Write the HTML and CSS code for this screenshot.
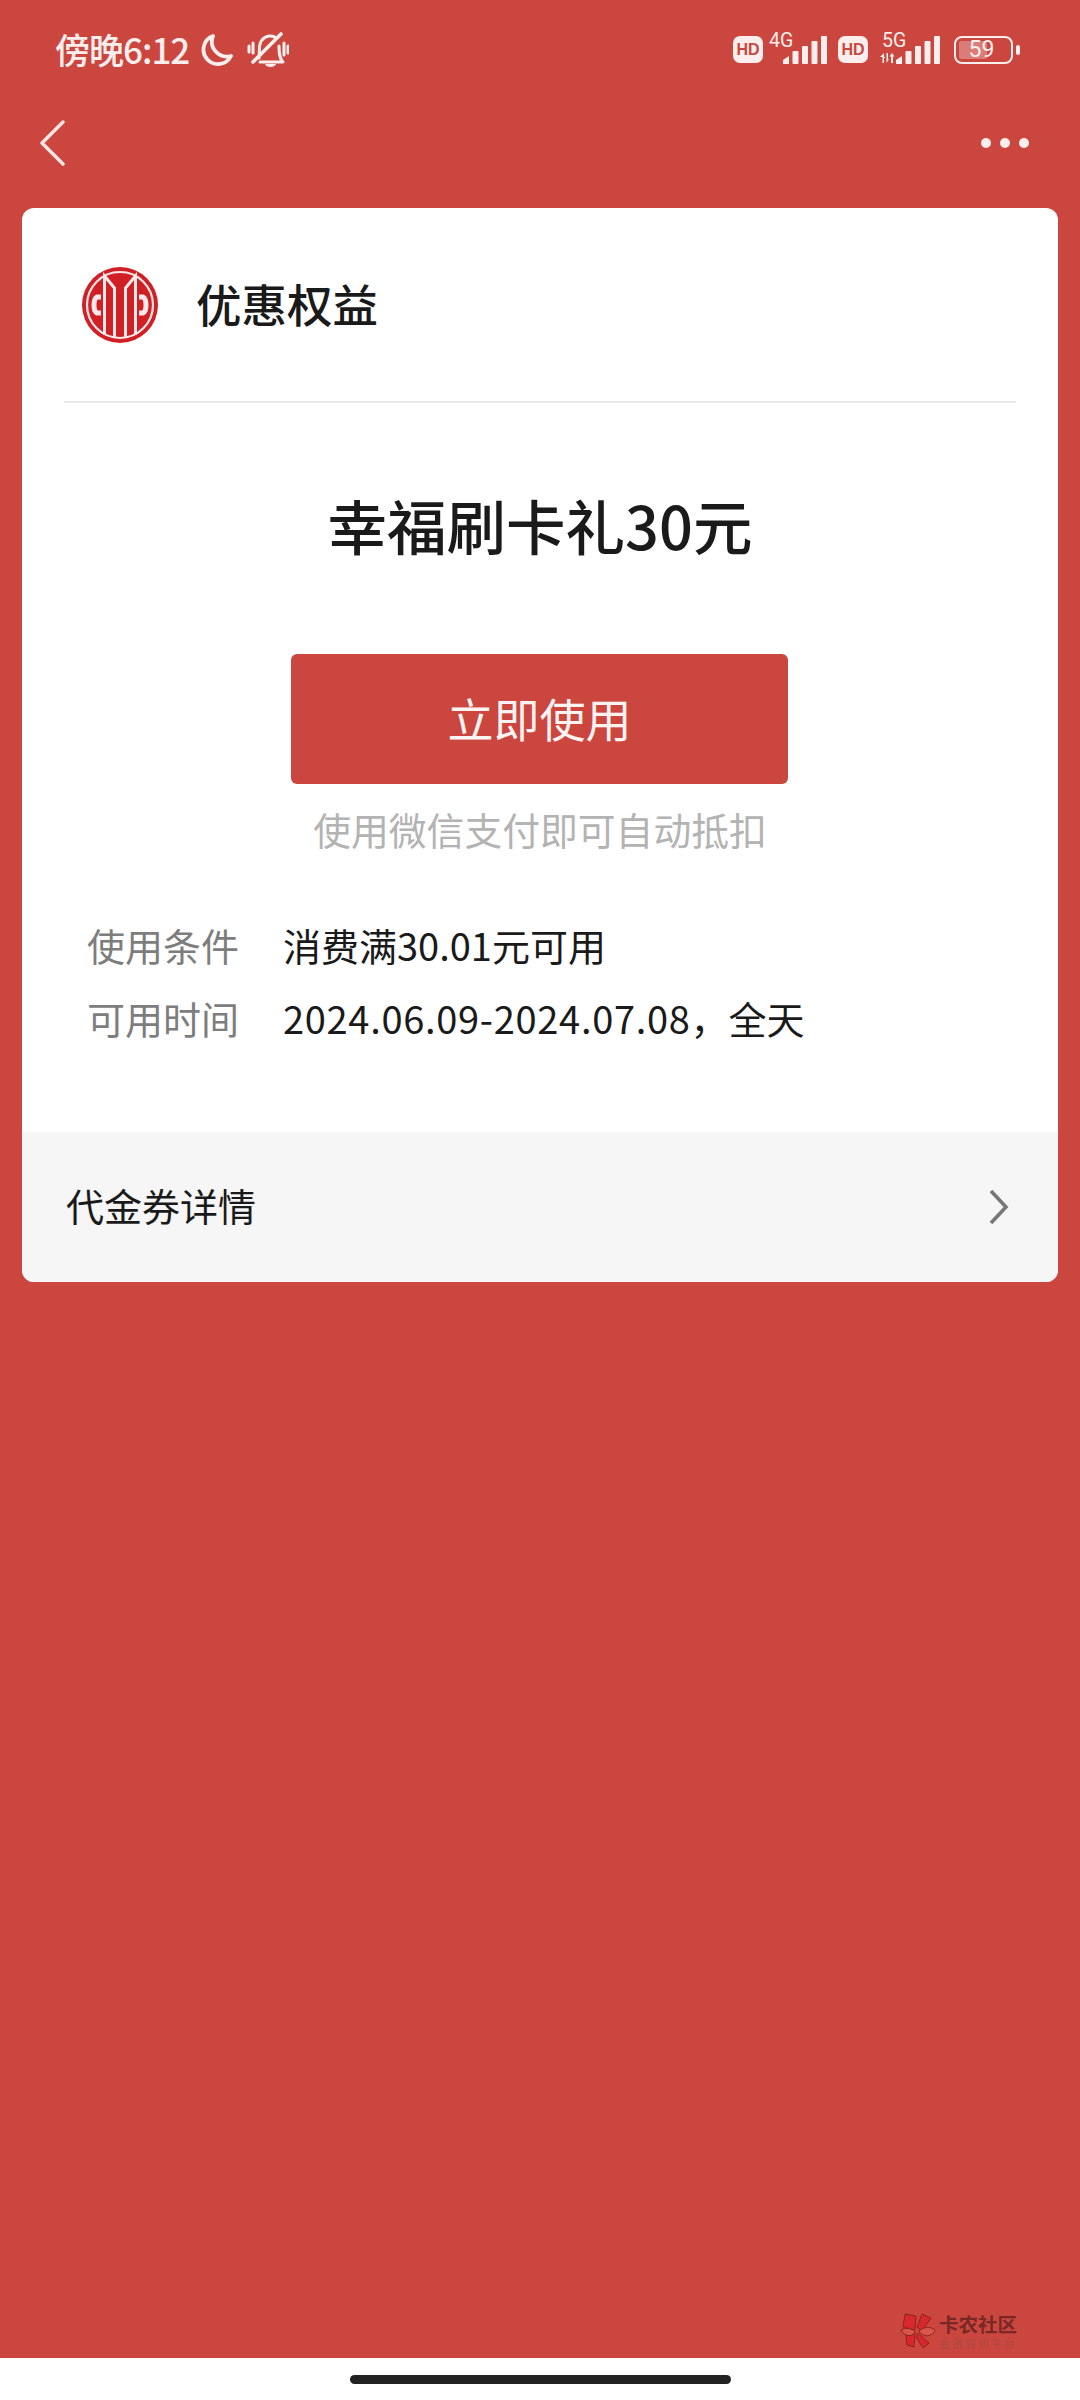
FILE: index.html
```html
<!DOCTYPE html>
<html lang="zh-CN">
<head>
    <meta charset="UTF-8">
    <meta name="viewport" content="width=device-width, initial-scale=1.0">
    <title>优惠权益</title>
    <link rel="stylesheet" href="styles.css">
</head>
<body>
    <div class="page">
        <!-- 状态栏 -->
        <div class="status-bar">
            <div class="status-left">
                <span class="status-time">傍晚6:12</span>
                <svg class="icon-moon" width="34" height="34" viewBox="0 0 34 34">
                    <path d="M13 3 A14.5 14.5 0 1 0 31 23 A15 15 0 0 1 13 3 Z" fill="none" stroke="#fbeeec" stroke-width="3.8" stroke-linejoin="round"/>
                </svg>
                <svg class="icon-bell" width="42" height="36" viewBox="0 0 42 36">
                    <g fill="none" stroke="#fbeeec" stroke-width="3" stroke-linecap="round" stroke-linejoin="round">
                        <path d="M12 26 C13 20 11 12 15 8 C19 3 26 3 29 6"/>
                        <path d="M32 14 C32 20 32 26 36 30 H13"/>
                        <path d="M6 30 L34 2" stroke-width="3.6"/>
                        <path d="M2 14 V20 M6 11 V21 M37 11 V23 M41 14 V21"/>
                    </g>
                    <path d="M18 32 H29 C28 36 19 36 18 32 Z" fill="#fbeeec"/>
                </svg>
            </div>
            <div class="status-right">
                <span class="hd-badge">HD</span>
                <div class="signal">
                    <span class="signal-label">4G</span>
                    <svg width="44" height="28" viewBox="0 0 44 28" fill="#fbeeec">
                        <path d="M0 28 V24 L6 20 V28 Z"/>
                        <rect x="9.5" y="15" width="6" height="13" rx="1"/>
                        <rect x="19" y="10" width="6" height="18" rx="1"/>
                        <rect x="28.5" y="5" width="6" height="23" rx="1"/>
                        <rect x="38" y="0" width="6" height="28" rx="1"/>
                    </svg>
                </div>
                <span class="hd-badge">HD</span>
                <div class="signal signal-5g">
                    <span class="signal-label">5G</span>
                    <svg class="signal-arrows" width="15" height="10" viewBox="0 0 15 10" fill="#fbeeec">
                        <path d="M0 4 L4 0 V4 H5 V5 H4 V10 H2.5 V4 Z"/>
                        <path d="M6.5 0 H8 V6 H9 L6.5 10 Z"/>
                        <path d="M9.5 3.5 L12 0 L14.5 3.5 H13 V10 H11 V3.5 Z"/>
                    </svg>
                    <svg width="44" height="28" viewBox="0 0 44 28" fill="#fbeeec">
                        <path d="M0 28 V24 L6 20 V28 Z"/>
                        <rect x="9.5" y="15" width="6" height="13" rx="1"/>
                        <rect x="19" y="10" width="6" height="18" rx="1"/>
                        <rect x="28.5" y="5" width="6" height="23" rx="1"/>
                        <rect x="38" y="0" width="6" height="28" rx="1"/>
                    </svg>
                </div>
                <div class="battery">
                    <div class="battery-body">
                        <div class="battery-fill"></div>
                        <span class="battery-num">59</span>
                    </div>
                    <div class="battery-tip"></div>
                </div>
            </div>
        </div>

        <!-- 导航栏 -->
        <div class="nav-bar">
            <svg width="26" height="46" viewBox="0 0 26 46">
                <path d="M23 2 L2 23 L23 44" fill="none" stroke="#fbe6e3" stroke-width="3.4" stroke-linecap="round" stroke-linejoin="round"/>
            </svg>
            <div class="more-dots"><span></span><span></span><span></span></div>
        </div>

        <!-- 卡券 -->
        <div class="card">
            <div class="card-head">
                <svg class="bank-logo" width="78" height="78" viewBox="0 0 78 78">
                    <circle cx="39" cy="39" r="38" fill="#d01f25"/>
                    <circle cx="39" cy="39" r="33" fill="none" stroke="#fbe9e9" stroke-width="2.2"/>
                    <g fill="none" stroke="#fbe9e9" stroke-width="3">
                        <path d="M23.5 69 V10 L33.5 22 V72"/>
                        <path d="M54.5 69 V10 L44.5 22 V72"/>
                        <path d="M20 31 H16 C12 33 12 45 16 47 H20" stroke-width="5"/>
                        <path d="M58 31 H62 C66 33 66 45 62 47 H58" stroke-width="5"/>
                    </g>
                </svg>
                <span class="card-name">优惠权益</span>
            </div>

            <div class="coupon-title">幸福刷卡礼30元</div>
            <button class="use-btn">立即使用</button>
            <div class="use-hint">使用微信支付即可自动抵扣</div>

            <div class="info-list">
                <div class="info-row">
                    <span class="info-label">使用条件</span>
                    <span class="info-value">消费满30.01元可用</span>
                </div>
                <div class="info-row">
                    <span class="info-label">可用时间</span>
                    <span class="info-value"><span class="info-date">2024.06.09-2024.07.08</span>，全天</span>
                </div>
            </div>

            <div class="card-foot">
                <span class="foot-text">代金券详情</span>
                <svg width="22" height="36" viewBox="0 0 22 36">
                    <path d="M3 2 L18 18 L3 34" fill="none" stroke="#777" stroke-width="3.6"/>
                </svg>
            </div>
        </div>

        <!-- 水印 -->
        <div class="watermark">
            <svg width="36" height="36" viewBox="0 0 36 36">
                <path d="M5 1 L16 3 L15 17 L3 14 Z" fill="#d8282e" stroke="#8e2422"/>
                <path d="M22 1 L31 5 L22 18 L17 14 Z" fill="#d8282e" stroke="#8e2422"/>
                <path d="M6 22 L15 19 L14 34 L7 32 Z" fill="#d8282e" stroke="#8e2422"/>
                <path d="M18 20 L29 30 L23 35 L16 24 Z" fill="#d8282e" stroke="#8e2422"/>
                <path d="M1 17 C6 14 14 16 15 19 C12 25 4 23 1 17 Z" fill="#d9554c" stroke="#8e2422"/>
                <path d="M19 18 C24 13 32 14 35 17 C33 24 23 25 19 18 Z" fill="#d9554c" stroke="#8e2422"/>
            </svg>
            <div class="watermark-text">
                <span class="watermark-name">卡农社区</span>
                <span class="watermark-sub">金融资讯平台</span>
            </div>
        </div>

        <!-- 底部手势条 -->
        <div class="home-area">
            <div class="home-bar"></div>
        </div>
    </div>
</body>
</html>
```

FILE: styles.css
```css
/* 页面 */
body {
    margin: 0;
    font-family: "Noto Sans CJK SC", "Noto Sans", sans-serif;
    color: #1a1a1a;
}

.page {
    position: relative;
    width: 1080px;
    height: 2400px;
    background-color: #cb463e;
    display: flex;
    flex-direction: column;
    overflow: hidden;
}

/* 状态栏 */
.status-bar {
    height: 96px;
    box-sizing: border-box;
    padding: 3px 60px 0 55px;
    display: flex;
    align-items: center;
    justify-content: space-between;
    color: #fbeeec;
}

.status-left {
    display: flex;
    align-items: center;
}

.status-time {
    padding-bottom: 3px;
    font-size: 35px;
    font-weight: 500;
    letter-spacing: -1px;
}

.icon-moon {
    margin-left: 11px;
}

.icon-bell {
    margin-left: 13px;
}

.status-right {
    display: flex;
    align-items: center;
}

.hd-badge {
    width: 30px;
    height: 27px;
    border-radius: 7px;
    background-color: #fbeeec;
    color: #cb463e;
    font-family: "Liberation Sans", sans-serif;
    font-size: 16px;
    font-weight: 700;
    line-height: 27px;
    text-align: center;
}

.signal {
    position: relative;
    width: 64px;
    height: 28px;
    display: flex;
    align-items: flex-end;
    justify-content: flex-end;
}

.signal-5g {
    width: 72px;
}

.signal-label {
    position: absolute;
    left: 6px;
    top: -5px;
    font-family: "Roboto", sans-serif;
    font-size: 19.5px;
    line-height: 20px;
}

.signal-5g .signal-label {
    left: 14px;
}

.signal-arrows {
    position: absolute;
    left: 12px;
    bottom: 1px;
}

.signal + .hd-badge {
    margin-left: 11px;
}

.battery {
    margin-left: 14px;
    display: flex;
    align-items: center;
}

.battery-body {
    position: relative;
    box-sizing: border-box;
    width: 59px;
    height: 28px;
    border: 2.5px solid #fbeeec;
    border-radius: 8px;
    display: flex;
    align-items: center;
    justify-content: center;
}

.battery-fill {
    position: absolute;
    left: 3px;
    top: 3px;
    bottom: 3px;
    width: 28px;
    border-radius: 2px;
    background-color: rgba(255, 255, 255, 0.3);
}

.battery-num {
    position: relative;
    left: -2px;
    font-family: "Roboto", sans-serif;
    font-size: 23px;
    line-height: 24px;
}

.battery-tip {
    width: 4px;
    height: 10px;
    margin-left: 3px;
    border-radius: 2px;
    background-color: #fbeeec;
}

/* 导航栏 */
.nav-bar {
    height: 94px;
    margin-bottom: 18px;
    padding: 0 51px 0 40px;
    display: flex;
    align-items: center;
    justify-content: space-between;
}

.more-dots {
    display: flex;
    gap: 9px;
}

.more-dots span {
    width: 10px;
    height: 10px;
    border-radius: 50%;
    background-color: #fbeeec;
}

/* 卡券 */
.card {
    margin: 0 22px;
    height: 1074px;
    border-radius: 12px;
    background-color: #fff;
    overflow: hidden;
    display: flex;
    flex-direction: column;
}

.card-head {
    height: 193px;
    margin: 0 42px;
    padding-left: 17px;
    border-bottom: 2px solid #e9e9e9;
    display: flex;
    align-items: center;
}

.card-name {
    margin-left: 37px;
    padding-bottom: 4px;
    font-size: 45.5px;
    font-weight: 500;
}

.coupon-title {
    margin-top: 81px;
    font-size: 59.5px;
    font-weight: 500;
    line-height: 80px;
    text-align: center;
}

.use-btn {
    display: block;
    width: 497px;
    height: 130px;
    margin: 90px 0 0 269px;
    padding: 0 0 4px;
    border: none;
    border-radius: 6px;
    background-color: #cb463e;
    color: #fdf3f2;
    font-family: inherit;
    font-size: 46px;
}

.use-hint {
    margin-top: 21px;
    color: #b3b3b3;
    font-size: 37.8px;
    line-height: 48px;
    text-align: center;
}

.info-list {
    margin-top: 65px;
    padding-left: 65px;
    display: flex;
    flex-direction: column;
    gap: 21px;
}

.info-row {
    display: flex;
    align-items: center;
    height: 52px;
    font-size: 38px;
}

.info-label {
    width: 196px;
    color: #7d7d7d;
}

.info-date {
    letter-spacing: 0.7px;
}

.card-foot {
    margin-top: auto;
    height: 150px;
    padding: 0 48px 0 44px;
    background-color: #f6f6f6;
    font-size: 38px;
    display: flex;
    align-items: center;
    justify-content: space-between;
}

.foot-text {
    padding-bottom: 6px;
}

/* 水印 */
.watermark {
    position: absolute;
    left: 900px;
    top: 2313px;
    display: flex;
    gap: 3px;
}

.watermark-text {
    display: flex;
    flex-direction: column;
}

.watermark-name {
    height: 22px;
    color: #7a2826;
    font-size: 19.5px;
    font-weight: 700;
    line-height: 22px;
    white-space: nowrap;
}

.watermark-sub {
    height: 12px;
    margin-top: 2px;
    color: #ab4a44;
    font-size: 11px;
    letter-spacing: 2px;
    line-height: 12px;
    white-space: nowrap;
}

/* 底部手势条 */
.home-area {
    margin-top: auto;
    height: 42px;
    background-color: #fff;
    display: flex;
    justify-content: center;
    padding-top: 17px;
    box-sizing: border-box;
}

.home-bar {
    width: 381px;
    height: 9px;
    border-radius: 5px;
    background-color: #222;
}
```
